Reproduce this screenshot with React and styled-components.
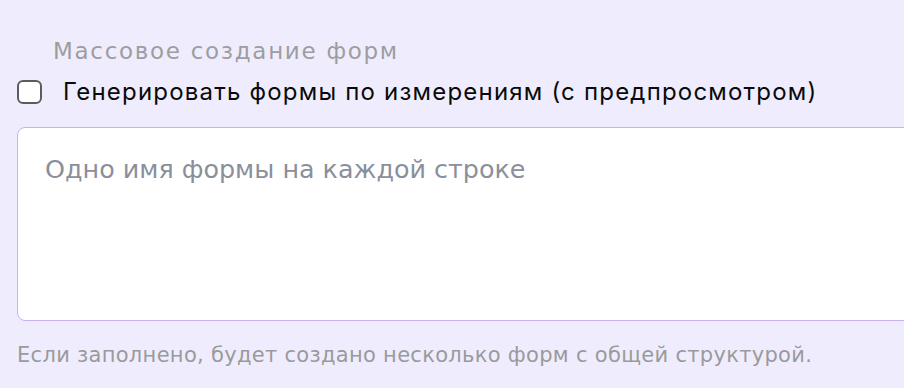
import styled, { createGlobalStyle } from 'styled-components';

const GlobalStyle = createGlobalStyle`
  html, body {
    margin: 0;
    padding: 0;
    background: #efedfd;
  }
  body {
    font-family: "DejaVu Sans", "Noto Sans", sans-serif;
    overflow: hidden;
  }
`;

const Section = styled.section`
  width: 904px;
  height: 388px;
  box-sizing: border-box;
  padding: 36px 0 0 17px;
  display: flex;
  flex-direction: column;
  overflow: hidden;
`;

const SectionTitle = styled.div`
  font-family: "DejaVu Sans", "Noto Sans", sans-serif;
  font-size: 23px;
  line-height: 30px;
  color: #9d9d9f;
  padding-left: 36px;
  letter-spacing: 1.7px;
`;

const CheckRow = styled.label`
  display: flex;
  align-items: center;
  gap: 21px;
  margin-top: 11px;
  cursor: pointer;
`;

const Box = styled.input.attrs({ type: 'checkbox' })`
  appearance: none;
  margin: 0;
  width: 25px;
  height: 24px;
  box-sizing: border-box;
  border: 2.2px solid #5c5c5e;
  border-radius: 6px;
  background: #fff;
  flex-shrink: 0;
`;

const CheckText = styled.span`
  font-family: "Inter", "Roboto", sans-serif;
  font-size: 24px;
  line-height: 30px;
  color: #0a0a0a;
  letter-spacing: 1.2px;
`;

const NamesArea = styled.textarea`
  margin-top: 20px;
  width: 920px;
  height: 194px;
  box-sizing: border-box;
  border: 1.5px solid #c8b0f1;
  border-radius: 8px;
  background: #fff;
  padding: 25px 27px;
  font-family: "DejaVu Sans", "Noto Sans", sans-serif;
  font-size: 25.4px;
  line-height: 32px;
  resize: none;
  outline: none;

  &::placeholder {
    color: #8a8f9c;
  }
`;

const Hint = styled.div`
  margin-top: 22px;
  font-family: "DejaVu Sans", "Noto Sans", sans-serif;
  font-size: 21px;
  line-height: 24px;
  letter-spacing: 0.3px;
  color: #9a9a9c;
`;

export default function App() {
  return (
    <>
      <GlobalStyle />
      <Section>
        <SectionTitle>Массовое создание форм</SectionTitle>
        <CheckRow>
          <Box />
          <CheckText>Генерировать формы по измерениям (с предпросмотром)</CheckText>
        </CheckRow>
        <NamesArea placeholder="Одно имя формы на каждой строке" />
        <Hint>Если заполнено, будет создано несколько форм с общей структурой.</Hint>
      </Section>
    </>
  );
}
